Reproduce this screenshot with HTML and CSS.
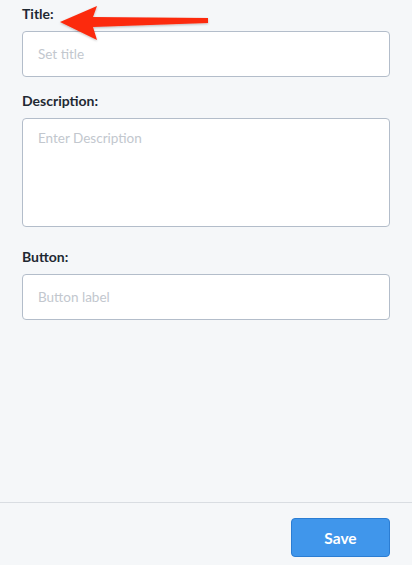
FILE: index.html
```html
<!DOCTYPE html>
<html lang="en">
<head>
    <meta charset="UTF-8">
    <meta name="viewport" content="width=device-width, initial-scale=1.0">
    <title>Edit Card</title>
    <link rel="stylesheet" href="styles.css">
</head>
<body>
    <div class="panel">
        <form class="card-form" id="cardForm">
            <div class="field title-field">
                <label for="cardTitle">Title:</label>
                <input type="text" id="cardTitle" placeholder="Set title">
                <!-- annotation arrow -->
                <svg class="arrow" width="160" height="40" viewBox="0 0 160 40">
                    <defs>
                        <filter id="shadow" x="-10%" y="-20%" width="120%" height="150%">
                            <feDropShadow dx="0" dy="1" stdDeviation="1" flood-color="#000" flood-opacity="0.25"/>
                        </filter>
                    </defs>
                    <path d="M2 18 L39 2 L35 13 L150 14 L150 19 L35 23 L39 36 Z" fill="#fc2a0d" filter="url(#shadow)"/>
                </svg>
            </div>
            <div class="field">
                <label for="cardDescription">Description:</label>
                <textarea id="cardDescription" placeholder="Enter Description"></textarea>
            </div>
            <div class="field">
                <label for="cardButton">Button:</label>
                <input type="text" id="cardButton" placeholder="Button label">
            </div>
        </form>
        <div class="footer">
            <button type="submit" form="cardForm" class="btn-save">Save</button>
        </div>
    </div>
</body>
</html>
```

FILE: styles.css
```css
html, body {
    margin: 0;
    height: 100%;
}
body {
    font-family: Lato, "Open Sans", Arial, sans-serif;
    background-color: #f5f7f9;
    color: #1f2933;
}
.panel {
    display: flex;
    flex-direction: column;
    height: 565px;
}
.card-form {
    flex: 1;
    padding: 6px 22px 0 22px;
}
.field {
    display: flex;
    flex-direction: column;
    margin-bottom: 16px;
}
.field:nth-child(2) {
    margin-bottom: 22px;
}
.title-field {
    position: relative;
}
label {
    font-size: 14px;
    font-weight: bold;
    line-height: 16px;
    margin-bottom: 9px;
}
input[type="text"], textarea {
    width: 100%;
    box-sizing: border-box;
    border: 1px solid #b3bdca;
    border-radius: 4px;
    background-color: #fff;
    font-family: inherit;
    font-size: 13.5px;
    color: #1f2933;
    padding: 0 15px;
    margin: 0;
    outline: none;
}
input[type="text"] {
    height: 46px;
}
textarea {
    display: block;
    height: 109px;
    padding-top: 11px;
    resize: none;
}
::placeholder {
    color: #c2c7ce;
}
.arrow {
    position: absolute;
    left: 36px;
    top: -2px;
}
.footer {
    height: 63px;
    border-top: 1px solid #d9dde2;
    display: flex;
    justify-content: flex-end;
    align-items: flex-start;
    padding: 15px 22px 0 0;
    box-sizing: border-box;
}
.btn-save {
    width: 99px;
    height: 39px;
    background-color: #4096eb;
    border: 1px solid #2b7dd3;
    border-radius: 4px;
    color: #fff;
    font-family: inherit;
    font-size: 15.5px;
    font-weight: bold;
    cursor: pointer;
}
```
